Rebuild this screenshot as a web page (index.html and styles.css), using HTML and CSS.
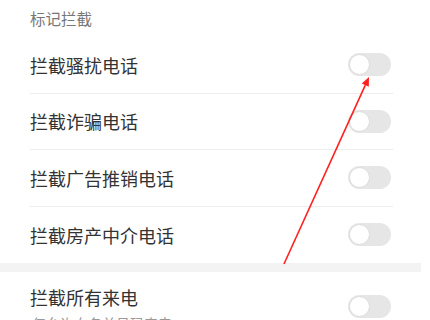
FILE: index.html
```html
<!DOCTYPE html>
<html lang="zh">
<head>
<meta charset="utf-8">
<link rel="stylesheet" href="styles.css">
</head>
<body>
<div class="page">
  <div class="section-title">标记拦截</div>
  <div class="row"><span class="label">拦截骚扰电话</span><span class="toggle"><span class="knob"></span></span></div>
  <div class="row"><span class="label">拦截诈骗电话</span><span class="toggle"><span class="knob"></span></span></div>
  <div class="row"><span class="label">拦截广告推销电话</span><span class="toggle"><span class="knob"></span></span></div>
  <div class="row last"><span class="label">拦截房产中介电话</span><span class="toggle"><span class="knob"></span></span></div>
  <div class="band"></div>
  <div class="row tall">
    <div class="texts">
      <span class="label">拦截所有来电</span>
      <span class="sub">仅允许白名单号码来电</span>
    </div>
    <span class="toggle"><span class="knob"></span></span>
  </div>
  <svg class="arrow" width="430" height="320" viewBox="0 0 430 320">
    <line x1="284" y1="264" x2="365.3" y2="85.2" stroke="#ff1f1f" stroke-width="1.6"/>
    <polygon points="369,77 368.8,86.8 361.8,83.6" fill="#ff1f1f"/>
  </svg>
</div>
</body>
</html>
```
FILE: styles.css
```css
html, body {
  margin: 0;
  padding: 0;
  background: #ffffff;
}
.page {
  position: relative;
  width: 421px;
  height: 320px;
  overflow: hidden;
  font-family: "Noto Sans CJK SC", "Noto Sans", sans-serif;
}
.section-title {
  height: 37px;
  box-sizing: border-box;
  padding: 8px 0 0 30px;
  font-size: 15.5px;
  line-height: 20px;
  color: #777777;
}
.row {
  display: flex;
  align-items: center;
  justify-content: space-between;
  box-sizing: border-box;
  height: 56.5px;
  margin: 0 28px 0 30px;
  border-bottom: 1px solid #ededed;
}
.row.last {
  border-bottom: none;
}
.row.tall {
  height: 69px;
  border-bottom: none;
  align-items: flex-start;
}
.label {
  font-size: 18px;
  line-height: 24px;
  color: #333333;
}
.texts {
  display: flex;
  flex-direction: column;
  padding-top: 13px;
}
.sub {
  font-size: 14px;
  line-height: 20px;
  color: #999999;
  margin-top: 4px;
  padding-left: 2px;
}
.row.tall .toggle {
  margin-top: 23px;
}
.toggle {
  display: flex;
  align-items: center;
  width: 43px;
  height: 23px;
  margin-right: 2px;
  border-radius: 12px;
  background: #e6e6e6;
  box-sizing: border-box;
  padding-left: 1px;
}
.knob {
  width: 21px;
  height: 21px;
  box-sizing: border-box;
  border-radius: 50%;
  background: #ffffff;
  border: 1px solid #dcdcdc;
}
.band {
  height: 9px;
  background: #f3f3f3;
}
.arrow {
  position: absolute;
  left: 0;
  top: 0;
}
```
